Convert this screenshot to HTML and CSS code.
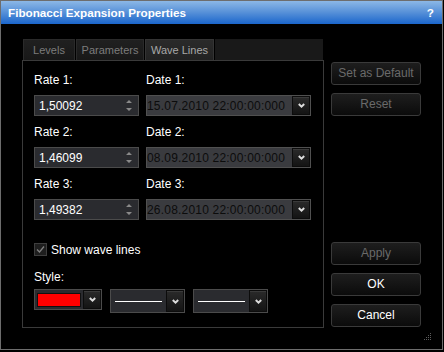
FILE: index.html
```html
<!DOCTYPE html>
<html lang="en">
<head>
    <meta charset="UTF-8">
    <title>Fibonacci Expansion Properties</title>
    <link rel="stylesheet" href="styles.css">
</head>
<body>
<div class="window">
    <div class="titlebar">
        <span>Fibonacci Expansion Properties</span>
        <span>?</span>
    </div>

    <div class="main">
        <div class="tabs-area">
            <div class="tabstrip">
                <div class="tab tab-levels">Levels</div>
                <div class="tab tab-params">Parameters</div>
                <div class="tab tab-wave active">Wave Lines</div>
                <div class="tab-fill"></div>
            </div>

            <div class="panel">
                <div class="fields">
                    <div class="field">
                        <label>Rate 1:</label>
                        <div class="spin"><span>1,50092</span>
                            <svg class="spin-arrows" width="6" height="11" viewBox="0 0 6 11"><path d="M3 0 L6 3 L0 3 Z M0 8 L6 8 L3 11 Z" fill="#8a8a8a"/></svg>
                        </div>
                    </div>
                    <div class="field">
                        <label>Date 1:</label>
                        <div class="combo"><span>15.07.2010 22:00:00:000</span>
                            <div class="dd"><svg width="7" height="5" viewBox="0 0 7 5"><polyline points="0.8,1 3.5,3.6 6.2,1" fill="none" stroke="#dcdcdc" stroke-width="2"/></svg></div>
                        </div>
                    </div>
                    <div class="field">
                        <label>Rate 2:</label>
                        <div class="spin"><span>1,46099</span>
                            <svg class="spin-arrows" width="6" height="11" viewBox="0 0 6 11"><path d="M3 0 L6 3 L0 3 Z M0 8 L6 8 L3 11 Z" fill="#8a8a8a"/></svg>
                        </div>
                    </div>
                    <div class="field">
                        <label>Date 2:</label>
                        <div class="combo"><span>08.09.2010 22:00:00:000</span>
                            <div class="dd"><svg width="7" height="5" viewBox="0 0 7 5"><polyline points="0.8,1 3.5,3.6 6.2,1" fill="none" stroke="#dcdcdc" stroke-width="2"/></svg></div>
                        </div>
                    </div>
                    <div class="field">
                        <label>Rate 3:</label>
                        <div class="spin"><span>1,49382</span>
                            <svg class="spin-arrows" width="6" height="11" viewBox="0 0 6 11"><path d="M3 0 L6 3 L0 3 Z M0 8 L6 8 L3 11 Z" fill="#8a8a8a"/></svg>
                        </div>
                    </div>
                    <div class="field">
                        <label>Date 3:</label>
                        <div class="combo"><span>26.08.2010 22:00:00:000</span>
                            <div class="dd"><svg width="7" height="5" viewBox="0 0 7 5"><polyline points="0.8,1 3.5,3.6 6.2,1" fill="none" stroke="#dcdcdc" stroke-width="2"/></svg></div>
                        </div>
                    </div>
                </div>

                <div class="check">
                    <div class="box"><svg width="11" height="11" viewBox="0 0 11 11"><polyline points="2,5.5 4.5,8 9,2.5" fill="none" stroke="#808080" stroke-width="1.3"/></svg></div>
                    <span>Show wave lines</span>
                </div>

                <div class="style-label">Style:</div>
                <div class="style-row">
                    <div class="color">
                        <div class="swatch"></div>
                        <div class="dd"><svg width="7" height="5" viewBox="0 0 7 5"><polyline points="0.8,1 3.5,3.6 6.2,1" fill="none" stroke="#dcdcdc" stroke-width="2"/></svg></div>
                    </div>
                    <div class="line-combo">
                        <div class="line"></div>
                        <div class="dd"><svg width="7" height="5" viewBox="0 0 7 5"><polyline points="0.8,1 3.5,3.6 6.2,1" fill="none" stroke="#dcdcdc" stroke-width="2"/></svg></div>
                    </div>
                    <div class="line-combo">
                        <div class="line"></div>
                        <div class="dd"><svg width="7" height="5" viewBox="0 0 7 5"><polyline points="0.8,1 3.5,3.6 6.2,1" fill="none" stroke="#dcdcdc" stroke-width="2"/></svg></div>
                    </div>
                </div>
            </div>
        </div>

        <div class="side">
            <div class="group">
                <div class="btn disabled">Set as Default</div>
                <div class="btn disabled">Reset</div>
            </div>
            <div class="group">
                <div class="btn disabled">Apply</div>
                <div class="btn">OK</div>
                <div class="btn">Cancel</div>
            </div>
        </div>
    </div>

    <svg class="grip" width="8" height="8" viewBox="0 0 8 8">
        <g fill="#5c5c5c">
            <rect x="6" y="0" width="1" height="1"/>
            <rect x="4" y="2" width="1" height="1"/><rect x="6" y="2" width="1" height="1"/>
            <rect x="2" y="4" width="1" height="1"/><rect x="4" y="4" width="1" height="1"/><rect x="6" y="4" width="1" height="1"/>
            <rect x="0" y="6" width="1" height="1"/><rect x="2" y="6" width="1" height="1"/><rect x="4" y="6" width="1" height="1"/><rect x="6" y="6" width="1" height="1"/>
        </g>
    </svg>
</div>
</body>
</html>
```

FILE: styles.css
```css
* {
    box-sizing: border-box;
}
body {
    margin: 0;
    background-color: #000;
    font-family: "Liberation Sans", Arial, sans-serif;
    font-size: 12px;
    color: #fff;
}
.window {
    position: relative;
    width: 443px;
    height: 350px;
    border: 1px solid #6d6d6d;
    background-color: #000;
}
.titlebar {
    height: 23px;
    display: flex;
    align-items: center;
    justify-content: space-between;
    padding: 0 8px 0 7px;
    background: linear-gradient(#8cb8e6, #5690d8 50%, #1b66cc);
    font-weight: bold;
    font-size: 11.7px;
}
.main {
    display: flex;
    gap: 7px;
    padding: 15px 0 0 21px;
}
.tabs-area {
    width: 302px;
}
.tabstrip {
    display: flex;
    gap: 1px;
    height: 21px;
    margin-left: 1px;
}
.tab {
    height: 21px;
    line-height: 20px;
    text-align: center;
    font-size: 11px;
    color: #7c7c7c;
    background: linear-gradient(#202020, #181818);
    border: 1px solid #2a2a2a;
    border-bottom: none;
}
.tab-levels { width: 52px; }
.tab-params { width: 68px; }
.tab-wave { width: 69px; }
.tab.active {
    color: #a8a8a8;
    background: linear-gradient(#2a2a2a, #222);
    border-color: #343434;
}
.tab-fill {
    flex: 1;
    margin-right: 1px;
    background-color: #191919;
}
.panel {
    height: 268px;
    border: 1px solid #3a3a3a;
    padding: 12px 0 0 11px;
}
.fields {
    display: grid;
    grid-template-columns: 105px 165px;
    column-gap: 7px;
    row-gap: 9px;
}
.field label {
    display: block;
    height: 15px;
    line-height: 15px;
    margin-bottom: 7px;
}
.spin {
    height: 21px;
    display: flex;
    align-items: center;
    justify-content: space-between;
    padding: 0 6px 0 4px;
    border: 1px solid #4b4b4b;
    background-color: #2a2b2f;
}
.combo {
    height: 21px;
    display: flex;
    align-items: center;
    justify-content: space-between;
    border: 1px solid #505050;
    background-color: #3a3b3f;
    color: #0c0c0c;
    letter-spacing: 0.2px;
}
.dd {
    width: 18px;
    height: 19px;
    display: flex;
    align-items: center;
    justify-content: center;
    border: 1px solid #0c0c0c;
    box-shadow: inset 0 1px 0 #3a3a3a;
    background: linear-gradient(#2a2a2a, #141414);
}
.check {
    display: flex;
    align-items: center;
    gap: 4px;
    height: 13px;
    margin-top: 23px;
}
.box {
    width: 13px;
    height: 13px;
    display: flex;
    align-items: center;
    justify-content: center;
    border: 1px solid #3e3e3e;
    background-color: #1e1e1e;
}
.style-label {
    height: 15px;
    line-height: 15px;
    margin-top: 14px;
}
.style-row {
    display: flex;
    align-items: flex-start;
    gap: 8px;
    margin-top: 4px;
}
.color {
    width: 68px;
    height: 21px;
    display: flex;
    align-items: center;
    gap: 2px;
    padding-left: 2px;
    border: 1px solid #4b4b4b;
    background-color: #2a2b2f;
}
.swatch {
    width: 44px;
    height: 14px;
    border: 1px solid #111;
    background-color: #ff0000;
}
.line-combo {
    width: 75px;
    height: 24px;
    display: flex;
    align-items: center;
    gap: 4px;
    padding-left: 4px;
    border: 1px solid #4b4b4b;
    background-color: #2a2b2f;
}
.line-combo .line {
    width: 47px;
    height: 1px;
    background-color: #fff;
}
.line-combo .dd {
    height: 22px;
}
.side {
    width: 90px;
    height: 265px;
    margin-top: 23px;
    display: flex;
    flex-direction: column;
    justify-content: space-between;
}
.group {
    display: flex;
    flex-direction: column;
    gap: 8px;
}
.btn {
    height: 23px;
    line-height: 21px;
    text-align: center;
    border: 1px solid #3a3a3a;
    border-radius: 3px;
    background: linear-gradient(#1e1e1e, #0b0b0b);
    color: #fff;
}
.btn.disabled {
    color: #6a6a6a;
}
.grip {
    position: absolute;
    right: 10px;
    bottom: 8px;
}
```
